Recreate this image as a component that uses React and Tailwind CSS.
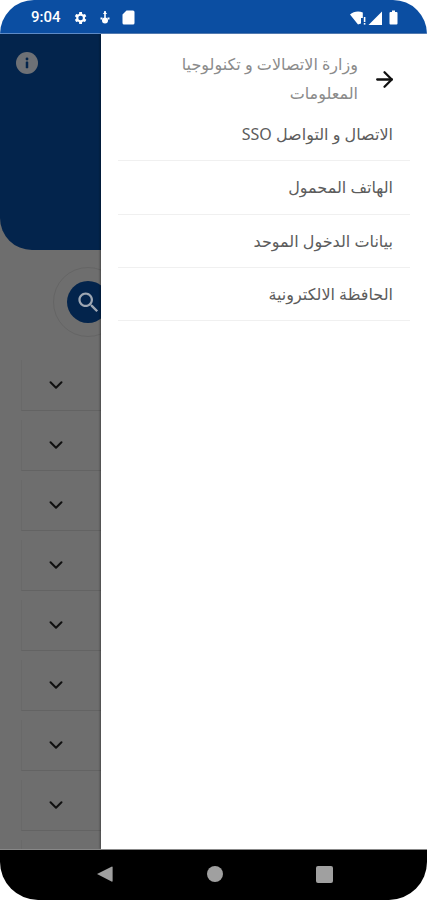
import React from "react";
import { ArrowRight, ChevronDown } from "lucide-react";

const items = ["الاتصال و التواصل SSO", "الهاتف المحمول", "بيانات الدخول الموحد", "الحافظة الالكترونية"];

function Card() {
  return (
    <div className="h-[51px] mb-[9px] ml-[21px] border-l border-b border-l-[#696969] border-b-[#636363] bg-[#6e6e6e] flex items-center pl-[23px] shrink-0">
      <ChevronDown size={22} strokeWidth={2.2} className="text-[#111]" />
    </div>
  );
}

export default function App() {
  return (
    <div className="w-[427px] h-[900px] flex flex-col bg-white overflow-hidden font-['Noto_Sans','DejaVu_Sans',sans-serif]">
      <div className="h-[34px] shrink-0 bg-[#0b4ea2] rounded-t-[34px] flex items-center justify-between pt-[2px] pl-[31px] pr-[29px] text-white border-b border-[#5d8ac6]">
        <div className="flex items-center">
          <span className="text-[15px] font-medium font-['Roboto',sans-serif] w-[41px]">9:04</span>
          <svg width="16" height="16" viewBox="0 0 24 24" fill="white">
            <path fillRule="evenodd" d="M19.4 13a7.5 7.5 0 0 0 0-2l2.1-1.6-2-3.5-2.5 1a7.6 7.6 0 0 0-1.700-1L14.900 3h-4l-.4 2.900a7.600 7.600 0 0 0-1.700 1l-2.500-1-2 3.500L6.400 11a7.500 7.500 0 0 0 0 2l-2.100 1.600 2 3.500 2.500-1a7.600 7.600 0 0 0 1.700 1l.4 2.900h4l.4-2.900a7.600 7.600 0 0 0 1.700-1l2.500 1 2-3.500zM12.900 15.500a3.500 3.500 0 1 1 0-7 3.500 3.500 0 0 1 0 7z" />
          </svg>
          <svg width="12" height="14" viewBox="0 0 12 14" fill="white" className="ml-[11px]">
            <rect x="5.200" y="0" width="1.600" height="9" />
            <path d="M3.800 3h4.400L6 0.500z" />
            <circle cx="6" cy="9.500" r="3" />
            <rect x="1.500" y="6.500" width="2" height="2" />
            <rect x="8.500" y="6.500" width="2" height="2" />
          </svg>
          <svg width="13" height="15" viewBox="0 0 13 15" fill="white" className="ml-[11px]">
            <path d="M4.500 0.500H11a1.500 1.500 0 0 1 1.500 1.500v11a1.500 1.500 0 0 1-1.500 1.500H2A1.500 1.500 0 0 1 .5 13V4.500z" />
          </svg>
        </div>
        <div className="flex items-center">
          <svg width="17" height="14" viewBox="0 0 17 14" fill="white">
            <path d="M0 3.500C2.200 1.600 5 .5 8 .5c1.700 0 3.300.35 4.800 1V7H11v5.500L8 13.500z" />
            <rect x="13.800" y="6" width="1.600" height="5" />
            <rect x="13.800" y="12" width="1.600" height="1.600" />
          </svg>
          <svg width="14" height="14" viewBox="0 0 14 14" fill="white" className="ml-[1px]">
            <path d="M14 0.500V14H0.500z" />
          </svg>
          <svg width="9" height="15" viewBox="0 0 9 15" fill="white" className="ml-[7px]">
            <path d="M3 0.500h3V2h1.500A1 1 0 0 1 8.500 3v10.500a1 1 0 0 1-1 1h-6a1 1 0 0 1-1-1V3a1 1 0 0 1 1-1H3z" />
          </svg>
        </div>
      </div>

      <div className="flex-1 flex min-h-0">
        <div className="w-[101px] shrink-0 overflow-hidden bg-[#6e6e6e] flex flex-col">
          <div className="h-[216px] shrink-0 w-[180px] bg-[#03244c] rounded-bl-[32px] pl-[16px] pt-[18px]">
            <div className="w-[22px] h-[22px] rounded-full bg-[#6e7176] flex items-center justify-center">
              <svg width="22" height="22" viewBox="0 0 23 23" fill="#03244c">
                <circle cx="11.500" cy="7.300" r="1.500" />
                <rect x="10.200" y="10" width="2.600" height="7" rx="0.500" />
              </svg>
            </div>
          </div>
          <div className="h-[110px] shrink-0 pl-[53px] pt-[17px]">
            <div className="w-[70px] h-[70px] rounded-full border border-[#656565] flex items-center justify-center">
              <div className="w-[42px] h-[42px] rounded-full bg-[#03244c] shrink-0 flex items-center justify-center">
                <svg width="27" height="27" viewBox="0 0 24 24" fill="#9ea7b3">
                  <path d="M15.5 14h-.79l-.28-.27C15.41 12.59 16 11.11 16 9.500 16 5.910 13.090 3 9.500 3S3 5.910 3 9.500 5.910 16 9.500 16c1.610 0 3.090-.59 4.230-1.570l.27.28v.79l5 4.990L20.490 19l-4.990-5zm-6 0C7.010 14 5 11.990 5 9.500S7.010 5 9.500 5 14 7.010 14 9.500 11.990 14 9.500 14z" />
                </svg>
              </div>
            </div>
          </div>
          {Array.from({ length: 8 }).map((_, i) => (
            <Card key={i} />
          ))}
          <div className="h-[20px] ml-[21px] border-l border-[#696969] shrink-0" />
        </div>

        <div dir="rtl" className="flex-1 bg-white pt-[16px] px-[17px] shadow-[-1px_0_2px_rgba(0,0,0,0.35)]">
          <div className="flex items-center h-[58px] pr-[13px]">
            <ArrowRight size={25} strokeWidth={2.2} className="text-[#111] shrink-0 ml-[14px]" />
            <div className="w-[190px] text-[16px] leading-[29px] text-[#8b8b8b]">وزارة الاتصالات و تكنولوجيا المعلومات</div>
          </div>
          {items.map((t) => (
            <div key={t} className="h-[53.33px] pr-[17px] flex items-center border-b border-[#f0f0f0] text-[16px] text-[#5c5c5c]">
              {t}
            </div>
          ))}
        </div>
      </div>

      <div className="h-[51px] shrink-0 bg-black rounded-b-[38px] border-t border-[#888] flex items-center justify-center pb-[2px] pl-[2px]">
        <svg width="18" height="18" viewBox="0 0 18 18" fill="#a0a0a0" className="mr-[93px]">
          <path d="M1 9 16 1.500a.6.6 0 0 1 .6.6v14a.6.6 0 0 1-.6.6z" />
        </svg>
        <div className="w-[16px] h-[16px] rounded-full bg-[#a0a0a0]" />
        <div className="w-[17px] h-[17px] rounded-[2px] bg-[#a0a0a0] ml-[93px]" />
      </div>
    </div>
  );
}
